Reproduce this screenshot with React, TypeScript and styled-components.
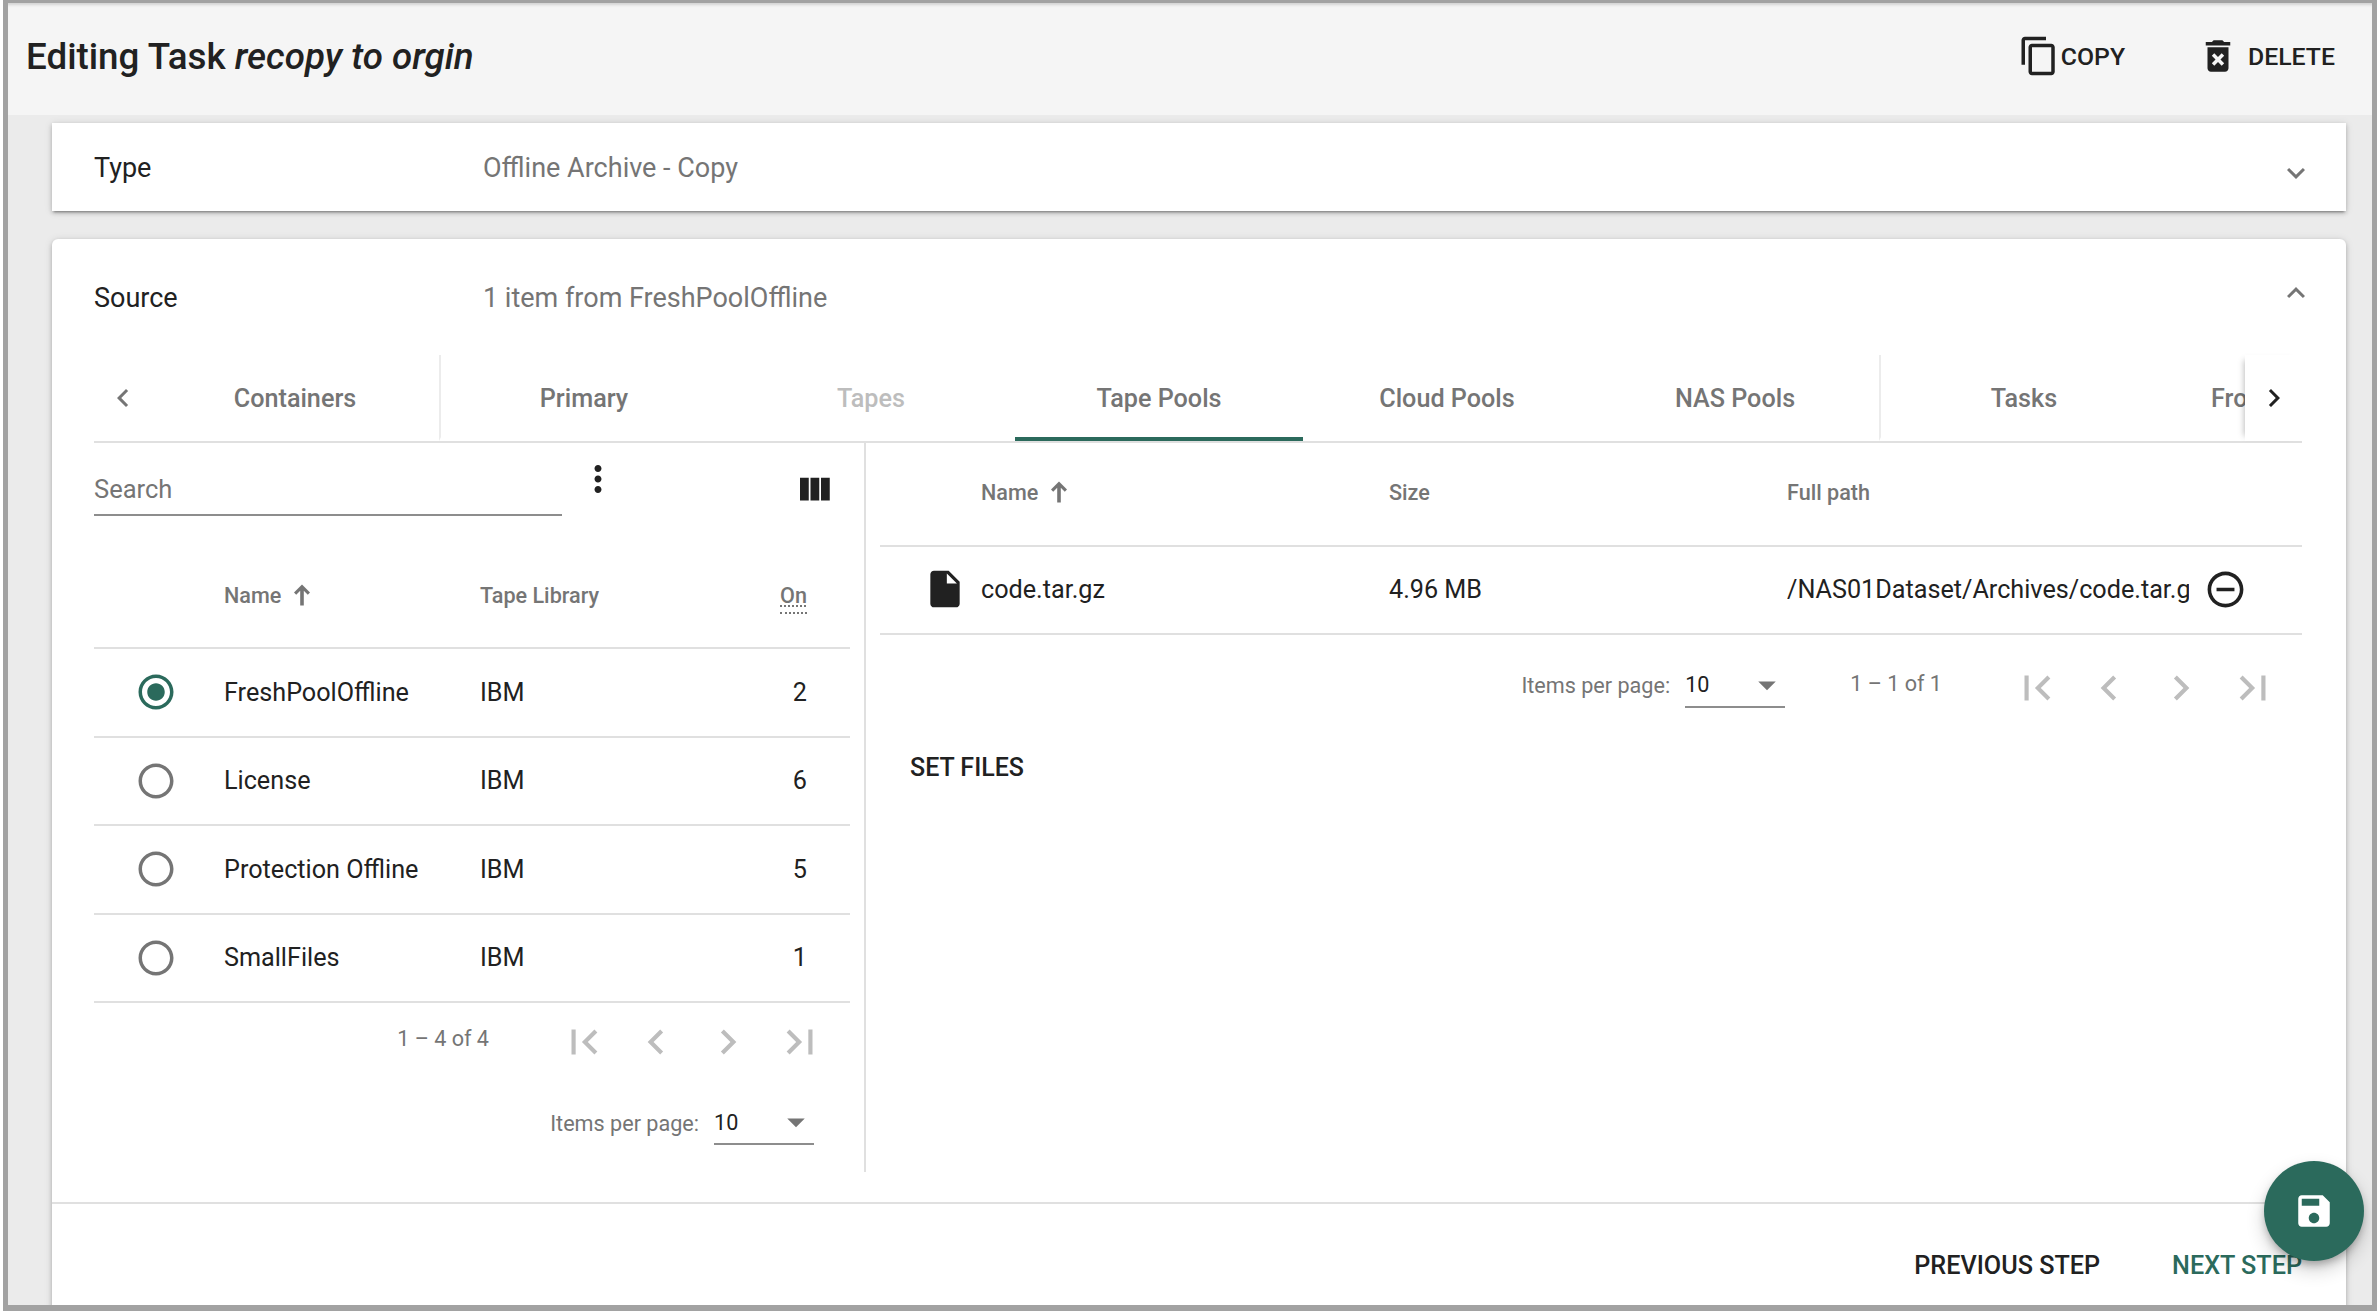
import styled, { createGlobalStyle } from "styled-components";

const TEAL = "#2b6a5c";

const GlobalStyle = createGlobalStyle`
  html, body {
    margin: 0;
    padding: 0;
    height: 100%;
    overflow: hidden;
    background: #fff;
  }
  body {
    font-family: Roboto, "Liberation Sans", sans-serif;
    color: #212121;
  }
`;

const paths = {
  copy: "M16 1H4c-1.1 0-2 .9-2 2v14h2V3h12V1zm3 4H8c-1.1 0-2 .9-2 2v14c0 1.1.9 2 2 2h11c1.1 0 2-.9 2-2V7c0-1.1-.9-2-2-2zm0 16H8V7h11v14z",
  trash: "M6 19c0 1.1.9 2 2 2h8c1.1 0 2-.9 2-2V7H6v12zm2.46-7.12l1.41-1.41L12 12.59l2.12-2.12 1.41 1.41L13.41 14l2.12 2.12-1.41 1.41L12 15.41l-2.12 2.12-1.41-1.41L10.59 14l-2.13-2.12zM15.5 4l-1-1h-5l-1 1H5v2h14V4z",
  down: "M16.59 8.59L12 13.17 7.41 8.59 6 10l6 6 6-6z",
  up: "M12 8l-6 6 1.41 1.41L12 10.83l4.59 4.58L18 14z",
  left: "M15.41 7.41L14 6l-6 6 6 6 1.41-1.41L10.83 12z",
  right: "M10 6L8.59 7.41 13.17 12l-4.58 4.59L10 18l6-6z",
  first: "M18.41 16.59L13.83 12l4.58-4.59L17 6l-6 6 6 6zM6 6h2v12H6z",
  last: "M5.59 7.41L10.17 12l-4.58 4.59L7 18l6-6-6-6zM16 6h2v12h-2z",
  sortUp: "M12 1.5l8 8-2.2 2.2-4-4v14.8h-3.6V7.7l-4 4L4 9.5z",
  more: "M12 8c1.1 0 2-.9 2-2s-.9-2-2-2-2 .9-2 2 .9 2 2 2zm0 2c-1.1 0-2 .9-2 2s.9 2 2 2 2-.9 2-2-.9-2-2-2zm0 6c-1.1 0-2 .9-2 2s.9 2 2 2 2-.9 2-2-.9-2-2-2z",
  columns: "M10 18h5V5h-5v13zm-6 0h5V5H4v13zM16 5v13h5V5h-5z",
  radioOff: "M12 2C6.48 2 2 6.48 2 12s4.48 10 10 10 10-4.48 10-10S17.52 2 12 2zm0 18c-4.42 0-8-3.58-8-8s3.58-8 8-8 8 3.58 8 8-3.58 8-8 8z",
  radioOn: "M12 7c-2.76 0-5 2.24-5 5s2.24 5 5 5 5-2.24 5-5-2.24-5-5-5zm0-5C6.48 2 2 6.48 2 12s4.48 10 10 10 10-4.48 10-10S17.52 2 12 2zm0 18c-4.42 0-8-3.58-8-8s3.58-8 8-8 8 3.58 8 8-3.58 8-8 8z",
  file: "M6 2c-1.1 0-1.99.9-1.99 2L4 20c0 1.1.89 2 1.99 2H18c1.1 0 2-.9 2-2V8l-6-6H6zm7 7V3.5L18.5 9H13z",
  remove: "M7 11v2h10v-2H7zm5-9C6.48 2 2 6.48 2 12s4.48 10 10 10 10-4.48 10-10S17.52 2 12 2zm0 18c-4.41 0-8-3.59-8-8s3.59-8 8-8 8 3.59 8 8-3.59 8-8 8z",
  caret: "M7 10l5 5 5-5z",
  save: "M17 3H5c-1.11 0-2 .9-2 2v14c0 1.1.89 2 2 2h14c1.1 0 2-.9 2-2V7l-4-4zm-5 16c-1.66 0-3-1.34-3-3s1.34-3 3-3 3 1.34 3 3-1.34 3-3 3zm3-10H5V5h10v4z",
};

const Svg = styled.svg<{ $size: number; $color: string }>`
  width: ${(p) => p.$size}px;
  height: ${(p) => p.$size}px;
  fill: ${(p) => p.$color};
  flex: none;
  display: block;
`;

const Icon = ({ name, size = 42, color = "#212121" }: { name: keyof typeof paths; size?: number; color?: string }) => (
  <Svg viewBox="0 0 24 24" $size={size} $color={color}>
    <path d={paths[name]} />
  </Svg>
);

const Frame = styled.div`
  position: relative;
  box-sizing: border-box;
  width: 2374px;
  height: 1311px;
  margin-left: 3px;
  overflow: hidden;
  border-style: solid;
  border-color: #a2a2a2;
  border-width: 3px 5px 6px 5px;
  background: #ebebeb;
  display: flex;
  flex-direction: column;
`;

const Toolbar = styled.header`
  height: 112px;
  flex: none;
  box-sizing: border-box;
  display: flex;
  align-items: center;
  justify-content: space-between;
  padding: 0 37px 6px 18px;
  background: #f5f5f5;
  box-shadow: inset 0 4px 3px -2px rgba(0, 0, 0, 0.14);
`;

const Title = styled.h1`
  margin: 0;
  font-size: 36.75px;
  font-weight: 500;
  em {
    font-style: italic;
  }
`;

const Actions = styled.div`
  display: flex;
  align-items: center;
  gap: 72px;
`;

const ActionButton = styled.button<{ $gap: number }>`
  display: flex;
  align-items: center;
  gap: ${(p) => p.$gap}px;
  padding: 0;
  border: 0;
  background: none;
  font: 500 24.8px Roboto, sans-serif;
  color: #212121;
`;

const Content = styled.main`
  flex: 1;
  display: flex;
  flex-direction: column;
  gap: 28px;
  padding: 8px 26px 0 44px;
`;

const Card = styled.section<{ $round?: boolean }>`
  background: #fff;
  border-radius: ${(p) => (p.$round ? "6px 6px 0 0" : "0")};
  box-shadow: 0 3px 2px -2px rgba(0, 0, 0, 0.3), 0 2px 4px rgba(0, 0, 0, 0.2), 0 1px 8px rgba(0, 0, 0, 0.12);
`;

const PanelHead = styled.div<{ $height: number; $iconShift: number }>`
  height: ${(p) => p.$height}px;
  box-sizing: border-box;
  display: flex;
  align-items: center;
  padding: 2px 32px 0 42px;
  svg {
    margin-top: ${(p) => p.$iconShift}px;
  }
`;

const PanelTitle = styled.div`
  width: 389px;
  font-size: 27px;
`;

const PanelValue = styled.div`
  flex: 1;
  font-size: 27px;
  color: #757575;
`;

const SourceBody = styled.div`
  padding: 0 44px 0 42px;
`;

const Tabs = styled.nav`
  height: 88px;
  display: flex;
  border-bottom: 2px solid #e0e0e0;
  box-sizing: border-box;
`;

const TabArrow = styled.div<{ $edge?: boolean }>`
  width: 57px;
  flex: none;
  display: flex;
  align-items: center;
  justify-content: center;
  background: #fff;
  box-shadow: ${(p) => (p.$edge ? "-6px 0 6px -5px rgba(0,0,0,.25)" : "none")};
  z-index: 1;
`;

const TabStrip = styled.div`
  flex: 1;
  display: flex;
  overflow: hidden;
`;

const Tab = styled.div<{ $active?: boolean; $off?: boolean; $divider?: boolean; $start?: boolean }>`
  width: 288px;
  flex: none;
  box-sizing: border-box;
  display: flex;
  align-items: center;
  justify-content: ${(p) => (p.$start ? "flex-start" : "center")};
  padding: 4px 0 0 ${(p) => (p.$start ? "44px" : "0")};
  font-size: 25.2px;
  font-weight: 500;
  color: ${(p) => (p.$off ? "#bdbdbd" : "#757575")};
  border-left: ${(p) => (p.$divider ? "2px solid #ececec" : "0")};
  border-bottom: 4px solid ${(p) => (p.$active ? TEAL : "transparent")};
`;

const Split = styled.div`
  display: flex;
  height: 729px;
`;

const LeftPane = styled.div`
  width: 772px;
  flex: none;
  box-sizing: border-box;
  border-right: 2px solid #e0e0e0;
`;

const RightPane = styled.div`
  flex: 1;
  min-width: 0;
  padding-left: 14px;
`;

const SearchBar = styled.div`
  height: 100px;
  box-sizing: border-box;
  display: flex;
  align-items: flex-start;
  padding: 16px 29px 0 0;
`;

const SearchInput = styled.input`
  width: 468px;
  height: 57px;
  box-sizing: border-box;
  margin: 0 15px 0 0;
  padding: 4px 0 0;
  border: 0;
  border-bottom: 2px solid #8d8d8d;
  outline: 0;
  background: none;
  font: 400 25.5px Roboto, sans-serif;
  &::placeholder {
    color: #757575;
    opacity: 1;
  }
`;

const MoreButton = styled.div`
  margin-top: -1px;
`;

const ColumnsButton = styled.div`
  margin: 10px 0 0 auto;
`;

const Row = styled.div<{ $cols: string; $height: number; $width?: number; $lift?: number }>`
  display: grid;
  grid-template-columns: ${(p) => p.$cols};
  align-items: center;
  height: ${(p) => p.$height}px;
  width: ${(p) => (p.$width ? `${p.$width}px` : "auto")};
  box-sizing: border-box;
  padding-bottom: ${(p) => p.$lift ?? 0}px;
  border-bottom: 2px solid #e0e0e0;
  font-size: 25.2px;
`;

const HeadCell = styled.div<{ $right?: boolean }>`
  display: flex;
  align-items: center;
  gap: 9px;
  font-size: 21.6px;
  font-weight: 500;
  color: #757575;
  justify-content: ${(p) => (p.$right ? "flex-end" : "flex-start")};
`;

const Abbr = styled.span`
  margin-top: 6px;
  text-decoration: underline dotted;
  text-underline-offset: 3px;
  border-bottom: 2px dotted #757575;
  padding-bottom: 4px;
`;

const IconCell = styled.div<{ $pad?: number }>`
  display: flex;
  justify-content: flex-end;
  padding-right: ${(p) => p.$pad ?? 0}px;
`;

const RemoveCell = styled.div`
  display: flex;
  justify-content: center;
`;

const NumCell = styled.div`
  text-align: right;
`;

const Clipped = styled.div`
  overflow: hidden;
  white-space: nowrap;
`;

const Pager = styled.div<{ $height: number; $pad: number }>`
  height: ${(p) => p.$height}px;
  display: flex;
  align-items: center;
  justify-content: flex-end;
  padding-right: ${(p) => p.$pad}px;
  font-size: 21.6px;
  color: #757575;
`;

const PagerIcons = styled.div`
  display: flex;
  gap: 22px;
  margin-left: 70px;
  padding-top: 4px;
`;

const Range = styled.span<{ $left?: number }>`
  margin-left: ${(p) => p.$left ?? 0}px;
  margin-top: -4px;
`;

const PerPage = styled.div`
  width: 100px;
  height: 44px;
  box-sizing: border-box;
  margin-left: 15px;
  display: flex;
  align-items: center;
  justify-content: space-between;
  border-bottom: 2px solid #8d8d8d;
  color: #212121;
  svg {
    margin-right: -3px;
  }
`;

const SetFiles = styled.button`
  display: block;
  margin: 17px 0 0 30px;
  padding: 0;
  border: 0;
  background: none;
  font: 500 25px Roboto, sans-serif;
  color: #212121;
`;

const Footer = styled.footer`
  margin: 30px -44px 0 -42px;
  height: 120px;
  box-sizing: border-box;
  border-top: 2px solid #e0e0e0;
  display: flex;
  align-items: flex-start;
  justify-content: flex-end;
  gap: 72px;
  padding: 47px 44px 0 0;
`;

const StepButton = styled.button<{ $primary?: boolean }>`
  padding: 0;
  border: 0;
  background: none;
  font: 500 25.2px Roboto, sans-serif;
  color: ${(p) => (p.$primary ? TEAL : "#212121")};
`;

const Fab = styled.button`
  position: absolute;
  left: 2256px;
  top: 1158px;
  width: 100px;
  height: 100px;
  border: 0;
  border-radius: 50%;
  background: ${TEAL};
  display: flex;
  align-items: center;
  justify-content: center;
  box-shadow: 0 5px 8px -2px rgba(0, 0, 0, 0.3), 0 9px 18px 1px rgba(0, 0, 0, 0.16);
`;

const leftCols = "130px 256px 267px 60px 43px";
const rightCols = "101px 408px 398px 402px 72px";

const pools = [
  { name: "FreshPoolOffline", on: 2, selected: true },
  { name: "License", on: 6 },
  { name: "Protection Offline", on: 5 },
  { name: "SmallFiles", on: 1 },
];

const PagerButtons = () => (
  <PagerIcons>
    <Icon name="first" size={50} color="#bdbdbd" />
    <Icon name="left" size={50} color="#bdbdbd" />
    <Icon name="right" size={50} color="#bdbdbd" />
    <Icon name="last" size={50} color="#bdbdbd" />
  </PagerIcons>
);

const ItemsPerPage = () => (
  <>
    <span>Items per page:</span>
    <PerPage>
      10
      <Icon name="caret" color="#757575" />
    </PerPage>
  </>
);

export default function App() {
  return (
    <Frame>
      <GlobalStyle />
      <Toolbar>
        <Title>
          Editing Task <em>recopy to orgin</em>
        </Title>
        <Actions>
          <ActionButton $gap={1}>
            <Icon name="copy" />
            COPY
          </ActionButton>
          <ActionButton $gap={9}>
            <Icon name="trash" />
            DELETE
          </ActionButton>
        </Actions>
      </Toolbar>
      <Content>
        <Card>
          <PanelHead $height={88} $iconShift={10}>
            <PanelTitle>Type</PanelTitle>
            <PanelValue>Offline Archive - Copy</PanelValue>
            <Icon name="down" size={36} color="#757575" />
          </PanelHead>
        </Card>
        <Card $round>
          <PanelHead $height={116} $iconShift={-10}>
            <PanelTitle>Source</PanelTitle>
            <PanelValue>1 item from FreshPoolOffline</PanelValue>
            <Icon name="up" size={36} color="#757575" />
          </PanelHead>
          <SourceBody>
            <Tabs>
              <TabArrow>
                <Icon name="left" size={36} color="#757575" />
              </TabArrow>
              <TabStrip>
                <Tab>Containers</Tab>
                <Tab $divider>Primary</Tab>
                <Tab $off>Tapes</Tab>
                <Tab $active>Tape Pools</Tab>
                <Tab>Cloud Pools</Tab>
                <Tab>NAS Pools</Tab>
                <Tab $divider>Tasks</Tab>
                <Tab $start>From</Tab>
              </TabStrip>
              <TabArrow $edge>
                <Icon name="right" size={36} />
              </TabArrow>
            </Tabs>
            <Split>
              <LeftPane>
                <SearchBar>
                  <SearchInput placeholder="Search" />
                  <MoreButton>
                    <Icon name="more" />
                  </MoreButton>
                  <ColumnsButton>
                    <Icon name="columns" />
                  </ColumnsButton>
                </SearchBar>
                <Row $cols={leftCols} $height={106} $width={756}>
                  <span />
                  <HeadCell>
                    Name
                    <Icon name="sortUp" size={24} color="#757575" />
                  </HeadCell>
                  <HeadCell>Tape Library</HeadCell>
                  <HeadCell $right>
                    <Abbr>On</Abbr>
                  </HeadCell>
                  <span />
                </Row>
                {pools.map((pool) => (
                  <Row key={pool.name} $cols={leftCols} $height={88.5} $width={756}>
                    <IconCell $pad={47}>
                      <Icon
                        name={pool.selected ? "radioOn" : "radioOff"}
                        color={pool.selected ? TEAL : "#757575"}
                      />
                    </IconCell>
                    <div>{pool.name}</div>
                    <div>IBM</div>
                    <NumCell>{pool.on}</NumCell>
                    <span />
                  </Row>
                ))}
                <Pager $height={74} $pad={39}>
                  <Range>1 – 4 of 4</Range>
                  <PagerButtons />
                </Pager>
                <Pager $height={92} $pad={50}>
                  <ItemsPerPage />
                </Pager>
              </LeftPane>
              <RightPane>
                <Row $cols={rightCols} $height={104} $lift={4}>
                  <span />
                  <HeadCell>
                    Name
                    <Icon name="sortUp" size={24} color="#757575" />
                  </HeadCell>
                  <HeadCell>Size</HeadCell>
                  <HeadCell>Full path</HeadCell>
                  <span />
                </Row>
                <Row $cols={rightCols} $height={88} $lift={2}>
                  <IconCell $pad={14}>
                    <Icon name="file" size={44} />
                  </IconCell>
                  <div>code.tar.gz</div>
                  <div>4.96 MB</div>
                  <Clipped>/NAS01Dataset/Archives/code.tar.gz</Clipped>
                  <RemoveCell>
                    <Icon name="remove" size={43} />
                  </RemoveCell>
                </Row>
                <Pager $height={101} $pad={24}>
                  <ItemsPerPage />
                  <Range $left={65}>1 – 1 of 1</Range>
                  <PagerButtons />
                </Pager>
                <SetFiles>SET FILES</SetFiles>
              </RightPane>
            </Split>
            <Footer>
              <StepButton>PREVIOUS STEP</StepButton>
              <StepButton $primary>NEXT STEP</StepButton>
            </Footer>
          </SourceBody>
        </Card>
      </Content>
      <Fab>
        <Icon name="save" color="#fff" />
      </Fab>
    </Frame>
  );
}
